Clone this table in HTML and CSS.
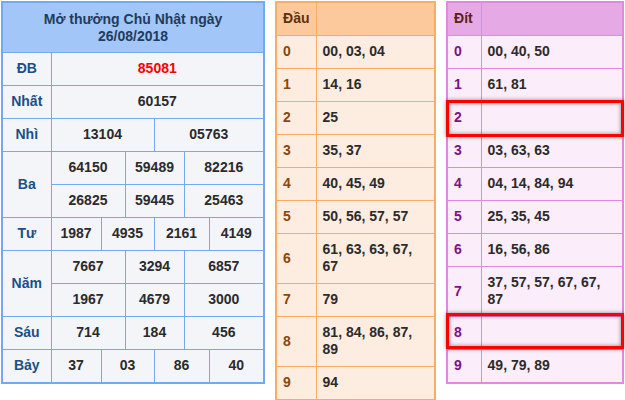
FILE: index.html
```html
<!DOCTYPE html>
<html lang="vi">
<head>
<meta charset="utf-8">
<title>Kết quả xổ số</title>
<link rel="stylesheet" href="styles.css">
</head>
<body>
<div class="page">
  <table class="kq">
    <colgroup>
      <col class="c-label"><col class="c2"><col class="c3"><col class="c4"><col class="c5"><col class="c6"><col class="c7">
    </colgroup>
    <thead>
      <tr><th colspan="7" class="title">Mở thưởng Chủ Nhật ngày<br>26/08/2018</th></tr>
    </thead>
    <tbody>
      <tr><td class="lbl">ĐB</td><td colspan="6" class="db">85081</td></tr>
      <tr><td class="lbl">Nhất</td><td colspan="6">60157</td></tr>
      <tr><td class="lbl">Nhì</td><td colspan="3">13104</td><td colspan="3">05763</td></tr>
      <tr><td class="lbl" rowspan="2">Ba</td><td colspan="2">64150</td><td colspan="2">59489</td><td colspan="2">82216</td></tr>
      <tr><td colspan="2">26825</td><td colspan="2">59445</td><td colspan="2">25463</td></tr>
      <tr><td class="lbl">Tư</td><td>1987</td><td colspan="2">4935</td><td colspan="2">2161</td><td>4149</td></tr>
      <tr><td class="lbl" rowspan="2">Năm</td><td colspan="2">7667</td><td colspan="2">3294</td><td colspan="2">6857</td></tr>
      <tr><td colspan="2">1967</td><td colspan="2">4679</td><td colspan="2">3000</td></tr>
      <tr><td class="lbl">Sáu</td><td colspan="2">714</td><td colspan="2">184</td><td colspan="2">456</td></tr>
      <tr><td class="lbl">Bảy</td><td>37</td><td colspan="2">03</td><td colspan="2">86</td><td>40</td></tr>
    </tbody>
  </table>

  <table class="lt dau">
    <colgroup><col class="k"><col></colgroup>
    <thead><tr><th>Đầu</th><th></th></tr></thead>
    <tbody>
      <tr><td class="key">0</td><td>00, 03, 04</td></tr>
      <tr><td class="key">1</td><td>14, 16</td></tr>
      <tr><td class="key">2</td><td>25</td></tr>
      <tr><td class="key">3</td><td>35, 37</td></tr>
      <tr><td class="key">4</td><td>40, 45, 49</td></tr>
      <tr><td class="key">5</td><td>50, 56, 57, 57</td></tr>
      <tr><td class="key">6</td><td>61, 63, 63, 67, 67</td></tr>
      <tr><td class="key">7</td><td>79</td></tr>
      <tr><td class="key">8</td><td>81, 84, 86, 87, 89</td></tr>
      <tr><td class="key">9</td><td>94</td></tr>
    </tbody>
  </table>

  <div class="dit-wrap">
    <table class="lt dit">
      <colgroup><col class="k"><col></colgroup>
      <thead><tr><th>Đít</th><th></th></tr></thead>
      <tbody>
        <tr><td class="key">0</td><td>00, 40, 50</td></tr>
        <tr><td class="key">1</td><td>61, 81</td></tr>
        <tr><td class="key">2</td><td></td></tr>
        <tr><td class="key">3</td><td>03, 63, 63</td></tr>
        <tr><td class="key">4</td><td>04, 14, 84, 94</td></tr>
        <tr><td class="key">5</td><td>25, 35, 45</td></tr>
        <tr><td class="key">6</td><td>16, 56, 86</td></tr>
        <tr><td class="key">7</td><td>37, 57, 57, 67, 67, 87</td></tr>
        <tr><td class="key">8</td><td></td></tr>
        <tr><td class="key">9</td><td>49, 79, 89</td></tr>
      </tbody>
    </table>
    <div class="mark mark-2"></div>
    <div class="mark mark-8"></div>
  </div>
</div>
</body>
</html>
```

FILE: styles.css
```css
html, body {
  margin: 0;
  padding: 0;
  background: #ffffff;
}
body {
  font-family: "Liberation Sans", Arial, sans-serif;
  font-size: 14px;
  font-weight: bold;
  color: #2b2b2b;
}
.page {
  display: flex;
  align-items: flex-start;
  gap: 10px;
  padding: 1px 0 0 1px;
}
table {
  border-collapse: collapse;
  table-layout: fixed;
}
td, th {
  padding: 7px 6px 8px;
  line-height: 17px;
  font-weight: bold;
}

/* Left results table */
.kq {
  width: 262px;
  border: 2px solid #74a8f0;
  background: #f4f5f9;
}
.kq td, .kq th {
  border: 1px solid #74a8f0;
  text-align: center;
  padding-left: 2px;
  padding-right: 2px;
}
.kq .c-label { width: 49px; }
.kq .c2 { width: 50px; }
.kq .c3 { width: 24px; }
.kq .c4 { width: 29px; }
.kq .c5 { width: 30px; }
.kq .c6 { width: 25px; }
.kq .c7 { width: 55px; }
.kq .title {
  background: #a2c6f8;
  color: #1f3c5c;
  padding-top: 8px;
  padding-bottom: 7px;
}
.kq .lbl { color: #1b4f86; }
.kq .db { color: #ff0000; }

/* Lo to tables */
.lt td, .lt th {
  text-align: left;
  padding-right: 8px;
}
.dau {
  width: 161px;
  border: 2px solid #f8ad67;
  background: #fdede0;
}
.dau td, .dau th { border: 1px solid #f8ad67; }
.dau th { background: #fbc99b; color: #5b3210; }
.dau .k { width: 40px; }
.dau .key { color: #8b4709; }

.dit-wrap {
  position: relative;
}
.dit {
  width: 178px;
  border: 2px solid #e288de;
  background: #fbedf9;
}
.dit td, .dit th { border: 1px solid #e288de; }
.dit th { background: #e5aae6; color: #5c2014; }
.dit .k { width: 34px; }
.dit .key { color: #7e1285; }

.mark {
  position: absolute;
  left: 0;
  width: 178px;
  box-sizing: border-box;
  border: 3px solid #f00;
  box-shadow: 0 0 4px rgba(0, 0, 0, 0.45), inset 0 0 4px rgba(0, 0, 0, 0.45);
}
.mark-2 { top: 99px; height: 37px; }
.mark-8 { top: 312px; height: 36px; }
```
